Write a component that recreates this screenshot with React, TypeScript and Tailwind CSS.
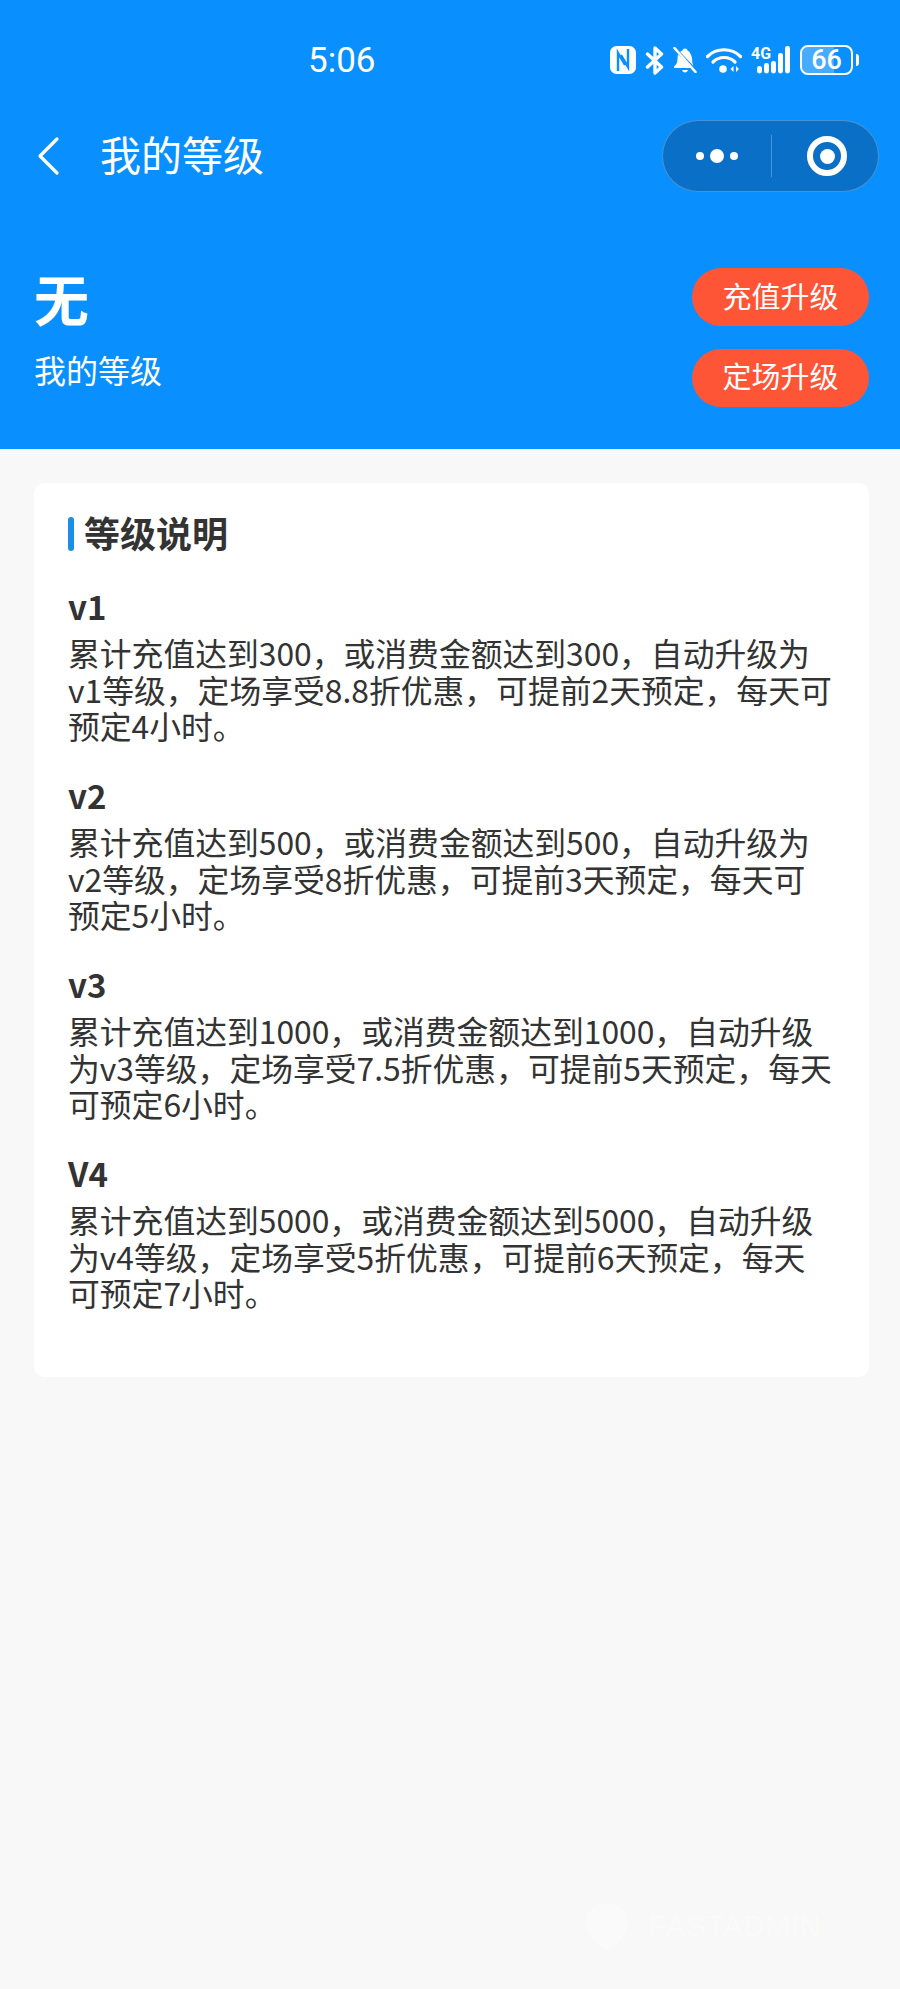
const levels = [
  {
    name: 'v1',
    desc: '累计充值达到300，或消费金额达到300，自动升级为v1等级，定场享受8.8折优惠，可提前2天预定，每天可预定4小时。',
  },
  {
    name: 'v2',
    desc: '累计充值达到500，或消费金额达到500，自动升级为v2等级，定场享受8折优惠，可提前3天预定，每天可预定5小时。',
  },
  {
    name: 'v3',
    desc: '累计充值达到1000，或消费金额达到1000，自动升级为v3等级，定场享受7.5折优惠，可提前5天预定，每天可预定6小时。',
  },
  {
    name: 'V4',
    desc: '累计充值达到5000，或消费金额达到5000，自动升级为v4等级，定场享受5折优惠，可提前6天预定，每天可预定7小时。',
  },
];

function NfcIcon() {
  return (
    <svg width="26" height="28" viewBox="0 0 26 28" fill="none">
      <rect x="0" y="0" width="26" height="28" rx="6.500" fill="#fff" />
      <path d="M8 25V7l7 12M18 3v18l-7-12" stroke="#0a8fff" strokeWidth="2.400" />
    </svg>
  );
}

function BluetoothIcon() {
  return (
    <svg width="19" height="29" viewBox="0 0 19 29" fill="none">
      <path d="M2.500 8l14 13-6.500 6V2l6.500 6-14 13" stroke="#fff" strokeWidth="3.400" strokeLinejoin="round" strokeLinecap="round" />
    </svg>
  );
}

function BellOffIcon() {
  return (
    <svg width="24" height="26" viewBox="0 0 24 26" fill="none">
      <path d="M12 1.500c-1.500 0-2.300.8-2.500 2-.9.3-1.700.8-2.300 1.400L20.500 19c-.8-1.500-1.400-3.500-1.400-6.500 0-3.800-2.300-8-4.600-9-.2-1.200-1-2-2.500-2z" fill="#fff" />
      <path d="M5 7.500c-.3 1.500-.5 3.200-.5 5 0 3.500-1.700 5.500-3.500 7v1.500h18z" fill="#fff" />
      <path d="M9 23h6c-.5 1.600-1.600 2.500-3 2.500S9.500 24.600 9 23z" fill="#fff" />
      <path d="M1.500 1l21 24" stroke="#fff" strokeWidth="2.600" strokeLinecap="round" />
    </svg>
  );
}

function WifiIcon() {
  return (
    <svg width="36" height="26" viewBox="0 0 36 26" fill="none">
      <path d="M1.500 9.500C10.500 .5 25.500 .5 34.500 9.500" stroke="#fff" strokeWidth="3.200" strokeLinecap="round" />
      <path d="M7 15c6-6 16-6 22 0" stroke="#fff" strokeWidth="3.200" strokeLinecap="round" />
      <circle cx="17" cy="22" r="3.800" fill="#fff" />
      <path d="M27.500 19v6l-3-3zM30 19v6l3-3z" fill="#fff" />
    </svg>
  );
}

function SignalIcon() {
  return (
    <svg width="40" height="28" viewBox="0 0 40 28">
      <text x="0" y="13" fill="#fff" fontSize="16" fontWeight="700" textLength="20" lengthAdjust="spacingAndGlyphs" fontFamily="Roboto, sans-serif">
        4G
      </text>
      <rect x="6" y="20" width="5" height="7.500" rx="2.400" fill="#fff" />
      <rect x="13" y="17" width="5" height="10.500" rx="2.400" fill="#fff" />
      <rect x="20" y="15" width="5" height="12.500" rx="2.400" fill="#fff" />
      <rect x="27" y="7" width="5" height="20.500" rx="2.400" fill="#fff" />
      <rect x="34" y="0" width="5" height="27.500" rx="2.400" fill="#fff" />
    </svg>
  );
}

function Battery() {
  return (
    <div className="flex items-center gap-[3px]">
      <div className="relative h-[30px] w-[53px] rounded-[8px] border-2 border-white">
        <div className="absolute inset-y-0 left-0 w-[66%] rounded-l-[6px] bg-white/25" />
        <span className="relative flex h-full items-center justify-center font-['Roboto',sans-serif] text-[27px] font-medium leading-none text-white">
          66
        </span>
      </div>
      <div className="h-[12px] w-[3px] rounded-r-full bg-white" />
    </div>
  );
}

export default function App() {
  return (
    <div className="relative min-h-[1989px] bg-[#f8f8f8] font-['Noto_Sans_CJK_SC','Noto_Sans',sans-serif] text-[#333]">
      <header className="h-[449px] bg-[#0a8fff] text-white">
        <div className="flex h-[120px] items-start justify-between pl-[308px] pr-[41px] pt-[45px]">
          <span className="font-['Roboto',sans-serif] text-[35px] font-normal leading-[32px]">5:06</span>
          <div className="flex items-center gap-[9px]">
            <NfcIcon />
            <BluetoothIcon />
            <BellOffIcon />
            <WifiIcon />
            <SignalIcon />
            <Battery />
          </div>
        </div>

        <div className="flex h-[72px] items-center justify-between pl-[37px] pr-[21px]">
          <div className="flex items-center gap-[40px]">
            <svg width="23" height="40" viewBox="0 0 23 40" fill="none">
              <path d="M20 3L3 20l17 17" stroke="#fff" strokeWidth="3.200" strokeLinecap="round" strokeLinejoin="round" />
            </svg>
            <span className="pb-[5px] text-[41px] leading-none">我的等级</span>
          </div>
          <div className="flex h-[72px] w-[217px] items-center rounded-full border border-white/25 bg-[#0a6fc6]">
            <div className="flex w-[108px] items-center justify-center gap-[6px]">
              <span className="h-[8px] w-[8px] rounded-full bg-white" />
              <span className="h-[14px] w-[14px] rounded-full bg-white" />
              <span className="h-[8px] w-[8px] rounded-full bg-white" />
            </div>
            <div className="h-[42px] w-px bg-white/25" />
            <div className="flex flex-1 items-center justify-center pl-[4px]">
              <div className="flex h-[40px] w-[40px] items-center justify-center rounded-full border-[6px] border-white">
                <span className="h-[15px] w-[15px] rounded-full bg-white" />
              </div>
            </div>
          </div>
        </div>

        <div className="flex items-start justify-between pl-[34px] pr-[31px] pt-[76px]">
          <div>
            <div className="-mt-[3px] text-[55px] font-bold leading-[64px]">无</div>
            <div className="mt-[20px] text-[32px] leading-[40px]">我的等级</div>
          </div>
          <div className="flex flex-col gap-[23px]">
            <button className="h-[58px] w-[177px] rounded-full bg-[#ff5537] pb-[3px] text-[29px] text-white">充值升级</button>
            <button className="h-[58px] w-[177px] rounded-full bg-[#ff5537] pb-[5px] text-[29px] text-white">定场升级</button>
          </div>
        </div>
      </header>

      <main className="pl-[34px] pr-[31px] pt-[34px]">
        <section className="h-[894px] rounded-[10px] bg-white pl-[34px] pr-[36px] pt-[26px]">
          <h2 className="flex h-[46px] items-center gap-[10px] text-[36px] font-bold leading-none">
            <span className="mt-[4px] h-[34px] w-[6px] rounded-full bg-[#1a8fe3]" />
            等级说明
          </h2>
          <div className="mt-[23px] flex flex-col gap-[23.500px]">
            {levels.map((level) => (
              <div key={level.name}>
                <div className="text-[33px] font-bold leading-[56px]">{level.name}</div>
                <p className="text-[31.800px] leading-[36.500px]">{level.desc}</p>
              </div>
            ))}
          </div>
        </section>
      </main>

      <div className="absolute left-[585px] top-[1902px] flex items-center gap-[20px] text-[#fafafa]">
        <svg width="44" height="50" viewBox="0 0 44 50">
          <path d="M22 1C9 3 1 8 1 20c0 12 10 22 21 29 11-7 21-17 21-29C43 8 35 3 22 1z" fill="#fafafa" />
        </svg>
        <span className="font-['Liberation_Sans',sans-serif] text-[29px] tracking-[1px]">FASTADMIN</span>
      </div>
    </div>
  );
}
